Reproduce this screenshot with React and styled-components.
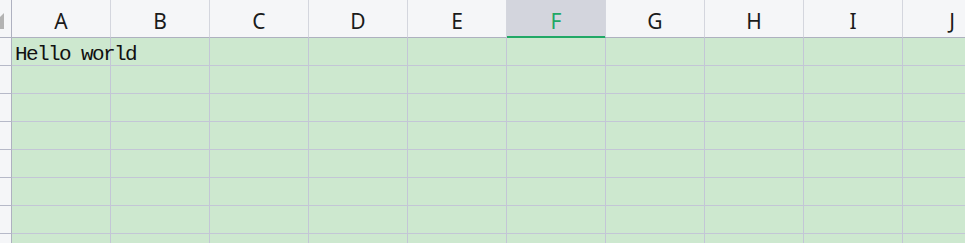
import React from "react";
import styled, { createGlobalStyle } from "styled-components";

const columns = ["A", "B", "C", "D", "E", "F", "G", "H", "I", "J"];
const rowCount = 8;
const activeColumn = "F";

const GlobalStyle = createGlobalStyle`
  html, body {
    margin: 0;
    padding: 0;
    background: #f5f6f8;
    overflow: hidden;
  }
`;

const Sheet = styled.div`
  display: grid;
  grid-template-columns: 12px repeat(${columns.length}, 99px);
  grid-auto-rows: 28px;
  grid-template-rows: 38px;
  width: 965px;
  height: 243px;
  overflow: hidden;
`;

const Corner = styled.div`
  position: relative;
  background: #f5f6f8;
  border-right: 1px solid #aeb1c0;
  border-bottom: 1px solid #aeb1c0;
  overflow: hidden;
`;

const CornerMark = styled.svg`
  position: absolute;
  left: 0;
  top: 12px;
`;

const ColumnHeader = styled.div`
  display: flex;
  align-items: center;
  justify-content: center;
  padding-top: 5px;
  background: ${(p) => (p.active ? "#d3d5dd" : "#f5f6f8")};
  color: ${(p) => (p.active ? "#21a866" : "#1b1b1b")};
  border-right: 1px solid #d4d6de;
  border-bottom: 1px solid ${(p) => (p.active ? "#21a866" : "#aeb1c0")};
  box-shadow: ${(p) => (p.active ? "inset 0 -1px 0 #21a866" : "none")};
  font-family: "Noto Sans", "Liberation Sans", sans-serif;
  font-size: 21px;
  box-sizing: border-box;
`;

const RowHeader = styled.div`
  background: #f5f6f8;
  border-right: 1px solid #aeb1c0;
  border-bottom: 1px solid #b6b9c8;
`;

const Cell = styled.div`
  background: #cde8cf;
  border-right: 1px solid #c3c6d6;
  border-bottom: 1px solid #c3c6d6;
  white-space: nowrap;
  position: relative;
`;

const CellText = styled.span`
  position: absolute;
  left: 3px;
  top: 5px;
  font-family: "Liberation Mono", "DejaVu Sans Mono", monospace;
  font-size: 21px;
  letter-spacing: -1.6px;
  color: #111;
  z-index: 1;
`;

const data = { A1: "Hello world" };

export default function App() {
  return (
    <>
      <GlobalStyle />
      <Sheet>
        <Corner>
          <CornerMark width="4" height="17" viewBox="0 0 4 17">
            <polygon points="-12,17 4,17 4,1" fill="#b3b3b3" />
          </CornerMark>
        </Corner>
        {columns.map((c) => (
          <ColumnHeader key={c} active={c === activeColumn}>
            {c}
          </ColumnHeader>
        ))}
        {Array.from({ length: rowCount }, (_, r) => (
          <React.Fragment key={r}>
            <RowHeader />
            {columns.map((c) => {
              const value = data[`${c}${r + 1}`];
              return (
                <Cell key={c}>{value && <CellText>{value}</CellText>}</Cell>
              );
            })}
          </React.Fragment>
        ))}
      </Sheet>
    </>
  );
}
